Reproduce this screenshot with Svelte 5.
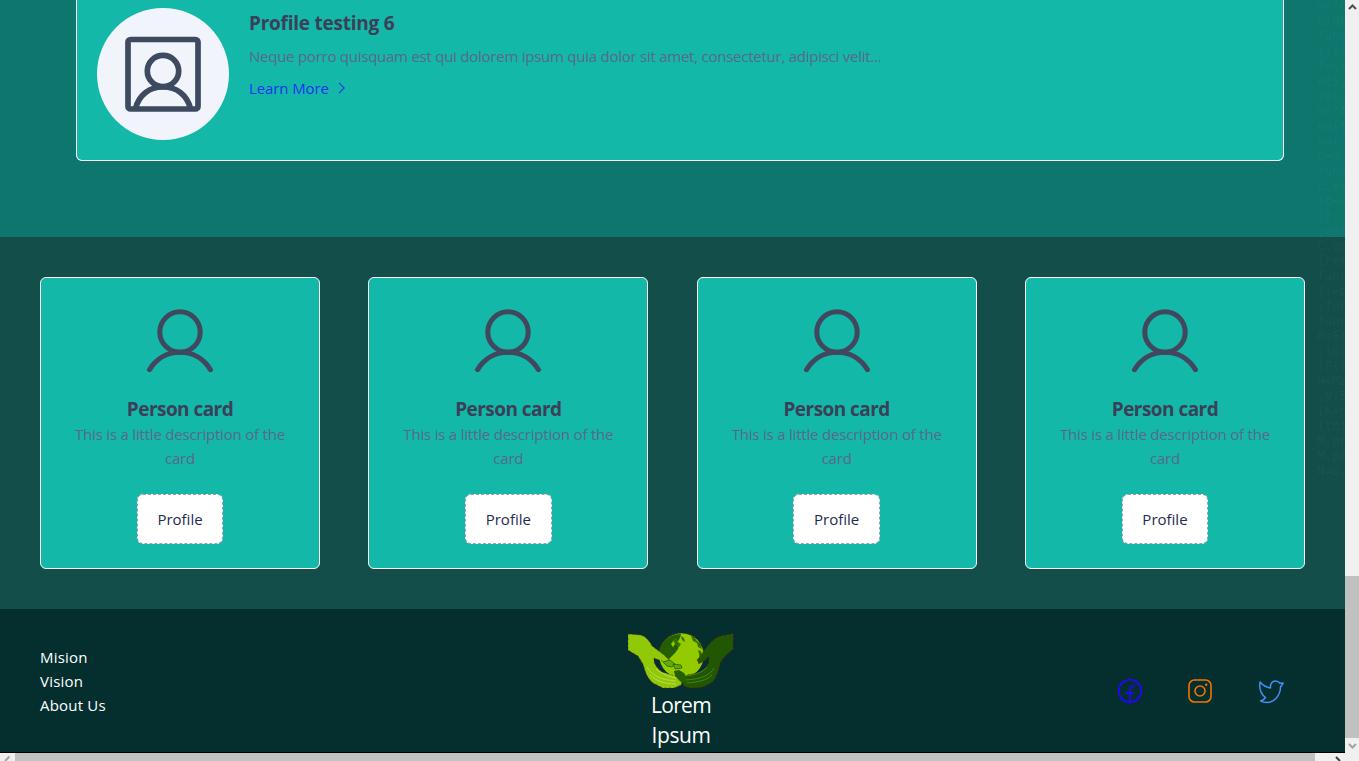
<script>
  const people = [1, 2, 3, 4];
  const links = [
    { label: 'Mision', cls: 'mision' },
    { label: 'Vision', cls: 'vision' },
    { label: 'About Us', cls: 'about' }
  ];
  const code = ['m("O', 'b)Ob', 'func', '{if(', 'f=c+', 'e[Sy', 'retu', 'm("A', 'ea(t', 'var ', 'b=u,', 'func', 'c.ex', '(d=a', '{}:c', ';var', 'C.us', '{ret', 'func', '1!=b', ';fun', 'func', '0:E(', ';!E(', '(F()', 'H=Ma', ',V:5', '(K=h', '{thi', 'M.pr', 'M.pr', 'N=u.'].join('\n');
</script>

<div class="window">
  <div class="viewport">
    <section class="profiles">
      <article class="profile-card">
        <div class="avatar">
          <svg width="78" height="78" viewBox="0 0 78 78" fill="none" stroke="#3d4a5f" stroke-width="5.700">
            <rect x="4" y="4.500" width="70" height="69.500" rx="2.500" />
            <circle cx="39" cy="36" r="15.700" />
            <path d="M11.500 73.500C15 60 25 52 39 52S63 60 66.500 73.500" />
          </svg>
        </div>
        <div class="profile-text">
          <h2><span>Profile testing 6</span></h2>
          <p><span>Neque porro quisquam est qui dolorem ipsum quia dolor sit amet, consectetur, adipisci velit...</span></p>
          <a class="more" href="#top">
            <span>Learn More</span>
            <svg width="8" height="12" viewBox="0 0 8 12" fill="none" stroke="currentColor" stroke-width="1.100"><path d="M1 .8 6.200 6 1 11.200" /></svg>
          </a>
        </div>
      </article>
    </section>

    <section class="people">
      {#each people as person (person)}
        <article class="person">
          <svg width="70" height="66" viewBox="0 0 70 66" fill="none" stroke="#41485d" stroke-width="5" stroke-linecap="round">
            <circle cx="35" cy="23" r="20.200" />
            <path d="M4.500 60.700C11 50 22 43.200 35 43.200S59 50 65.500 60.700" />
          </svg>
          <h3><span>Person card</span></h3>
          <p><span>This is a little description of the</span><br /><span>card</span></p>
          <button><span>Profile</span></button>
        </article>
      {/each}
    </section>

    <footer>
      <nav>
        {#each links as link (link.label)}
          <a href="#top"><span class={link.cls}>{link.label}</span></a>
        {/each}
      </nav>
      <div class="brand">
        <svg width="106" height="56" viewBox="0 0 106 56">
          <circle cx="53.500" cy="22.500" r="22.300" fill="#94ca00" />
          <path d="M53 1C42 1 34 8 31.500 17L33 24l6 4 5-5 3-3 3-4 1-4-4-1-2 3-2-3 3-4 4 1 2-3z" fill="#235f00" />
          <path d="M45 7l3-2 2 4 3 2-2 3-4-3zM53 3l3 2 1 4-3-2zM63 3l3 1 3 4 4 3 1 5-4-2-1-4-4-2zM70 17l3 1 2 6-3 1z" fill="#337300" />
          <path d="M31.500 17A22.300 22.300 0 0 1 75.500 19" fill="none" stroke="#8b1c16" stroke-width=".7" stroke-dasharray="2 2" />
          <g stroke="#9b1c16" stroke-width=".6" stroke-dasharray="2 2.500">
            <path d="M0 1L12 2C17 3 21 7 24 13L36 22 42 28 42 31 34 28 26 25C25 31 30 36 34 39L47 43 54 49 53 52 46 55 35 55 25 50C18 44 17 37 15 31L10 23 0 17z" fill="#8fc908" />
            <path d="M105 1L93 3C84 6 80 13 76 18L69 27 71 31 76 28 81 23 81 29C80 33 75 38 70 40L59 42 54 48 56 53 62 55 75 54 84 49C90 43 90 35 93 28L98 22 105 16z" fill="#205700" />
          </g>
          <path d="M35 29l7-2 5 4-3 3-5-1zM45 31l8 1 1 3-7 1z" fill="#65a909" stroke="#245f00" stroke-width=".8" />
          <path d="M46 38l5-1 5 3 3 5-1 5-5-1-6-6z" fill="#245f00" />
          <path d="M19 34c6 10 16 13 29 14M22 42c6 6 15 9 26 9M28 36c6 5 13 8 21 9" fill="none" stroke="#cbdc5a" stroke-width=".8" />
          <path d="M86 35c-4 8-14 11-28 12M84 42c-6 6-15 7-25 8M79 34c-4 5-12 8-20 9" fill="none" stroke="#4e8e24" stroke-width=".8" />
        </svg>
        <div class="name"><span class="lorem">Lorem</span><br /><span class="ipsum">Ipsum</span></div>
      </div>
      <div class="social">
        <svg width="26" height="26" viewBox="0 0 26 26" fill="none" stroke="#2306f5" stroke-width="1.800" stroke-linecap="round"><circle cx="13" cy="13" r="11.300" /><path d="M13 24V11.500c0-2.600 1.500-3.700 4-3.500M9.500 15h6.500" /></svg>
        <svg class="insta" width="26" height="26" viewBox="0 0 26 26" fill="none" stroke="#f47500" stroke-width="1.600"><rect x="2" y="2" width="22" height="22" rx="5.500" /><circle cx="13" cy="13" r="5" /><circle cx="19.200" cy="6.800" r="1.200" fill="#f47500" stroke="none" /></svg>
        <svg width="26" height="26" viewBox="0 0 26 26" fill="none" stroke="#428df7" stroke-width="1.500" stroke-linejoin="round"><path d="M2 4C5 7.500 8 9.300 12.500 10 12 6 14 3 17.500 3c2 0 3.500 1 4.500 2.300l3.200-.300-2.700 4C22.500 17.500 16 24.500 9 24.500c-3 0-5-.500-6.500-1.500 2.500-.500 4-2 5-3.500C3 16 1 10.500 2 4z" /></svg>
      </div>
    </footer>
    <div class="hbar">
      <div class="hbutton"><svg width="15" height="8" viewBox="0 0 15 8" fill="none" stroke="#a3a3a3" stroke-width="2"><path d="M9.500 3.500 5 8" /></svg></div>
      <div class="hthumb"></div>
      <div class="htrack"><svg width="30" height="8" viewBox="0 0 30 8" fill="none" stroke="#404040" stroke-width="2"><path d="M21 4l4 4" /></svg></div>
    </div>
    <pre aria-hidden="true">{code}</pre>
  </div>
  <div class="vbar">
    <svg width="14" height="14" viewBox="0 0 14 14" fill="none" stroke="#505050" stroke-width="2"><path d="M4 9l3.500-3.500L11 9" /></svg>
    <div class="vthumb"></div>
    <svg width="14" height="14" viewBox="0 0 14 14" fill="none" stroke="#a3a3a3" stroke-width="2"><path d="M4 6l3.500 3.500L11 6" /></svg>
  </div>
</div>

<style>
  :global(body) { margin: 0; overflow: hidden; }
  * { box-sizing: border-box; }
  .window { display: flex; width: 1359px; height: 761px; font-family: "Open Sans", "Noto Sans", sans-serif; font-size: 15px; overflow: hidden; }
  .viewport { position: relative; width: 1345px; display: flex; flex-direction: column; overflow: hidden; }
  svg { display: block; flex: none; }
  span { white-space: nowrap; }
  h2, h3, p { margin: 0; }
  a { text-decoration: none; }
  pre { position: absolute; left: 1317px; top: -2px; margin: 0; font: 12.5px/15px "DejaVu Sans Mono", monospace; color: rgba(110, 150, 130, 0.1); pointer-events: none; }
  .profiles { height: 237px; background: #0f766e; padding: 0 61px 0 76px; }
  .profile-card { height: 161px; background: #14b8a9; border: 1px solid #fff; border-top: 0; border-radius: 0 0 6px 6px; padding: 8px 20px; display: flex; gap: 20px; }
  .avatar { width: 132px; height: 132px; border-radius: 50%; background: #f1f5fb; display: grid; place-items: center; }
  .profile-text { line-height: 24px; }
  h2, h3 { font-size: 19px; line-height: 28px; font-weight: 700; color: #3b4058; }
  h2 { letter-spacing: -0.24px; }
  h3 { letter-spacing: -0.54px; }
  p { color: #58698a; }
  .profile-text h2 { margin-top: 1px; }
  .profile-text p { margin: 7px 0 8px; letter-spacing: -0.247px; }
  .more { color: #1734f0; display: flex; align-items: center; gap: 9px; letter-spacing: -0.1px; }
  .people { height: 372px; background: #134e4a; padding: 40px 40px; display: flex; justify-content: space-between; }
  .person { width: 280px; height: 292px; background: #14b8a9; border: 1px solid #fff; border-radius: 6px; display: flex; flex-direction: column; align-items: center; padding-top: 31px; text-align: center; }
  .person h3 { margin-top: 20px; }
  .person p { line-height: 24px; margin-top: -1px; letter-spacing: -0.2px; }
  button { font: inherit; color: #1e2b50; width: 86.500px; height: 50px; margin-top: 24px; padding: 0; background: #fff; border: 1px dashed #94a3b8; border-radius: 6px; }
  footer { height: 144px; background: #042f2e; border-bottom: 1px solid #000; padding: 0 61px 0 40px; color: #fff; display: grid; grid-template-columns: 588px 106px 1fr; }
  nav { padding-top: 36px; display: flex; flex-direction: column; line-height: 24px; letter-spacing: 0.2px; }
  nav a { color: #fff; }
  .brand { padding-top: 24px; text-align: center; }
  .name { font-size: 21px; line-height: 30px; margin-top: 1px; }
  .lorem { letter-spacing: -0.7px; }
  .ipsum { letter-spacing: -0.4px; }
  .social { display: flex; justify-content: flex-end; gap: 44px; padding-top: 69px; }
  .insta { margin-right: 1px; }
  .hbar { height: 8px; display: flex; background: #f0f0f0; overflow: hidden; }
  .hbutton { width: 15px; }
  .hthumb { flex: 1; background: #c1c1c1; }
  .htrack { width: 30px; }
  .vbar { width: 14px; background: #f0f0f0; display: flex; flex-direction: column; }
  .vthumb { height: 162px; margin-top: 562px; background: #c1c1c1; }
</style>
